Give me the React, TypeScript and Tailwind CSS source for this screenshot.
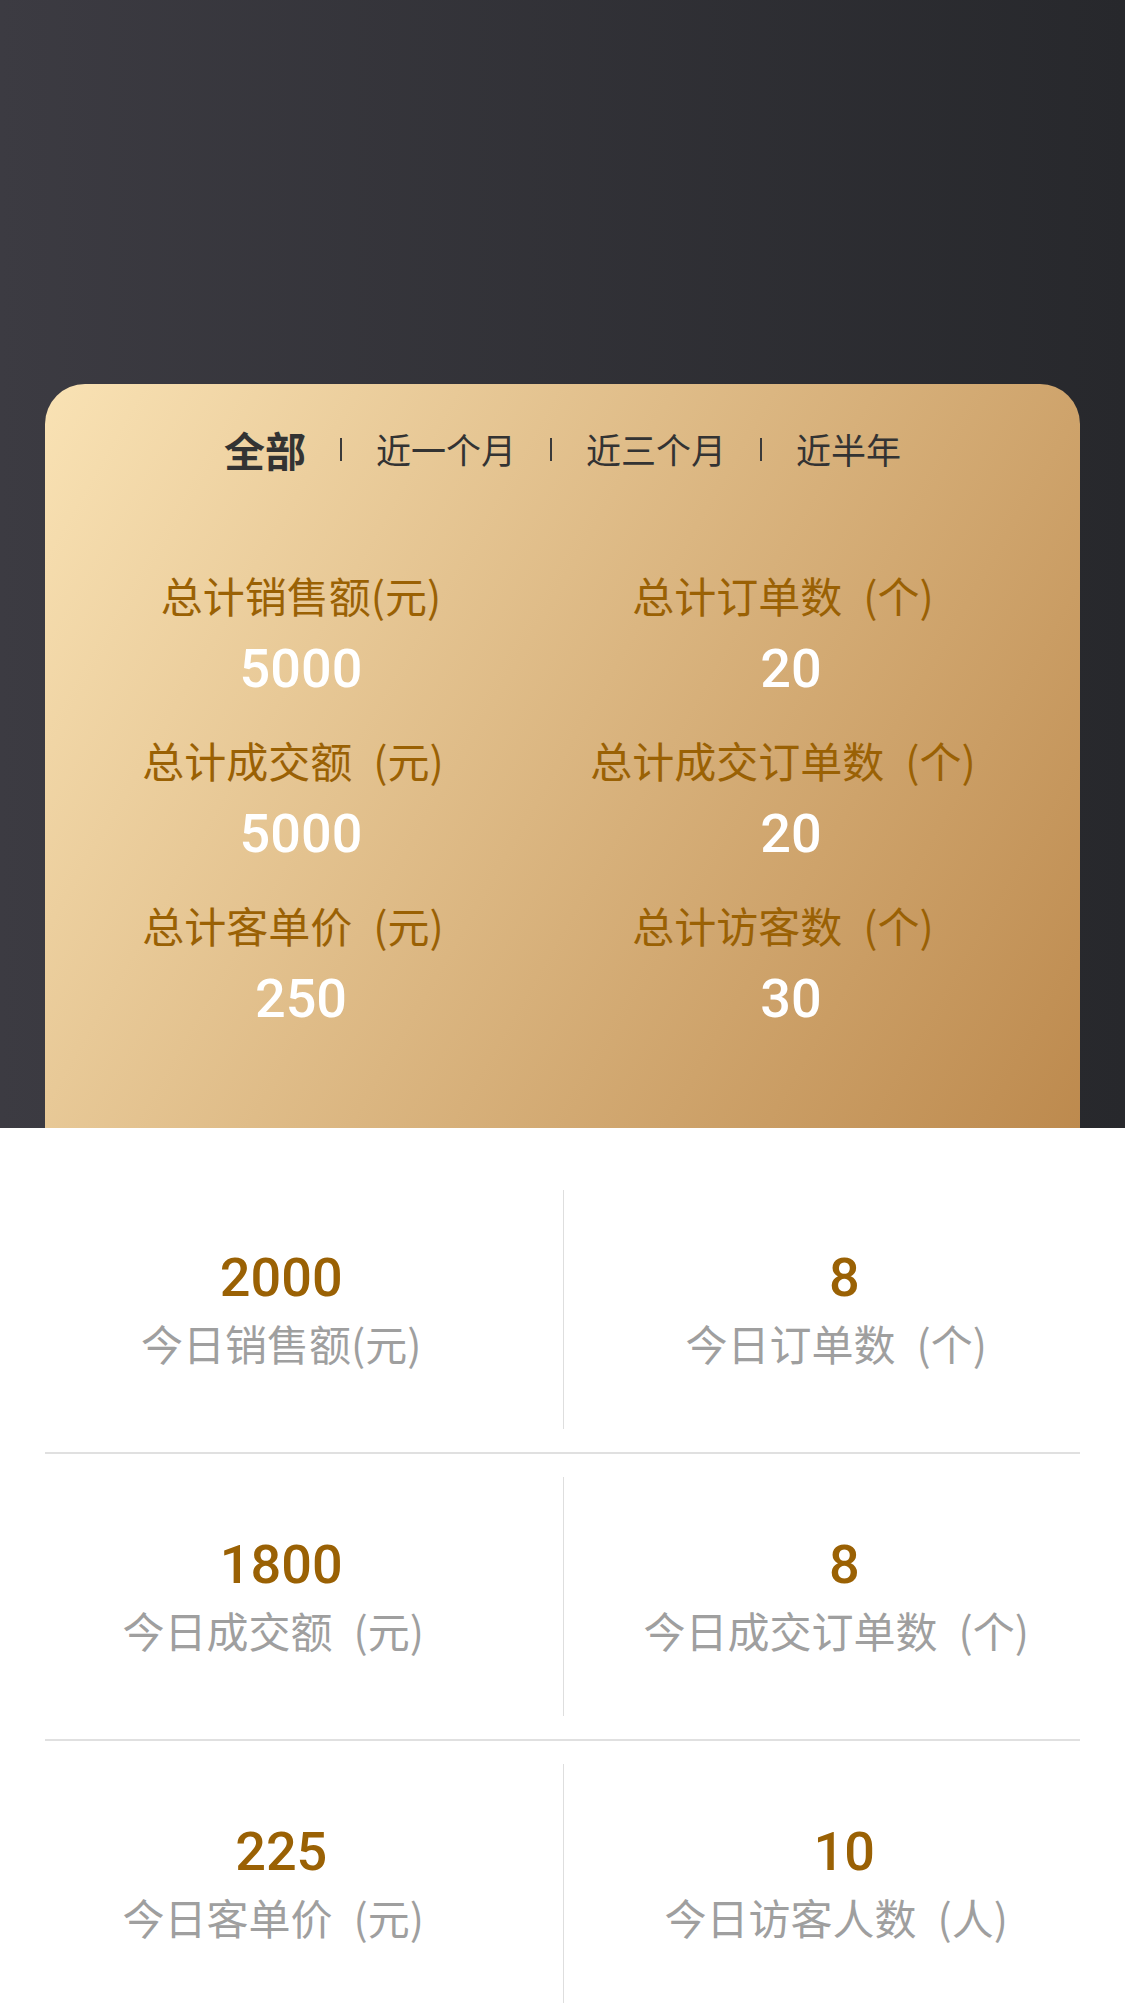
import React from "react";

const cjk = { fontFamily: '"Noto Sans CJK SC", "Noto Sans", sans-serif' };
const num = { fontFamily: 'Roboto, "Liberation Sans", sans-serif' };

const tabs = ["全部", "近一个月", "近三个月", "近半年"];

// [main, unit, spaced]
type Label = [string, string, boolean];

const totals: [Label, string][] = [
  [["总计销售额", "(元)", false], "5000"],
  [["总计订单数", "(个)", true], "20"],
  [["总计成交额", "(元)", true], "5000"],
  [["总计成交订单数", "(个)", true], "20"],
  [["总计客单价", "(元)", true], "250"],
  [["总计访客数", "(个)", true], "30"],
];

const today: [string, Label][][] = [
  [
    ["2000", ["今日销售额", "(元)", false]],
    ["8", ["今日订单数", "(个)", true]],
  ],
  [
    ["1800", ["今日成交额", "(元)", true]],
    ["8", ["今日成交订单数", "(个)", true]],
  ],
  [
    ["225", ["今日客单价", "(元)", true]],
    ["10", ["今日访客人数", "(人)", true]],
  ],
];

function LabelText({ l, className }: { l: Label; className: string }) {
  const [main, unit, spaced] = l;
  return (
    <div className={className + (spaced ? " pr-[16px]" : "")} style={cjk}>
      {main}
      {spaced ? "\u2002" : ""}
      {unit}
    </div>
  );
}

function Cell({ value, label, divider }: { value: string; label: Label; divider?: boolean }) {
  return (
    <div
      className={
        "flex h-[239px] w-1/2 flex-col items-center justify-center " +
        (divider ? "border-l border-[#dedede]" : "")
      }
    >
      <div className="h-[60px] text-[54px] font-medium leading-[60px] text-[#9a6104]" style={num}>
        {value}
      </div>
      <LabelText
        l={label}
        className="mt-[10px] h-[50px] whitespace-nowrap text-[42px] leading-[50px] text-[#9f9f9f]"
      />
      <div className="h-[4px]" />
    </div>
  );
}

export default function App() {
  return (
    <div className="min-h-[2004px] w-full overflow-hidden bg-white">
      <div className="bg-gradient-to-r from-[#3c3b42] to-[#27282c] px-[45px] pt-[384px]">
        <div className="h-[744px] rounded-t-[40px] bg-[linear-gradient(120deg,#f9e2b4_0%,#bd8a4e_100%)]">
          <div className="flex pt-[35px]">
            <div className="flex h-[60px] w-full items-center justify-center gap-[34px]" style={cjk}>
              {tabs.map((t, i) => (
                <React.Fragment key={t}>
                  {i > 0 && <div className="h-[23px] w-[2px] bg-[#3a3a3a]" />}
                  <div
                    className={
                      i === 0
                        ? "text-[41px] font-bold leading-[60px] text-[#333333]"
                        : "text-[35px] leading-[60px] text-[#333333]"
                    }
                  >
                    {t}
                  </div>
                </React.Fragment>
              ))}
            </div>
          </div>
          <div className="ml-[11px] mt-[91px] grid grid-cols-[490px_490px] gap-y-[36px]">
            {totals.map(([label, value]) => (
              <div key={label[0]} className="flex flex-col items-center">
                <LabelText
                  l={label}
                  className="h-[50px] whitespace-nowrap text-[42px] leading-[50px] text-[#9a6104]"
                />
                <div className="mt-[19px] h-[60px] text-[54px] font-medium leading-[60px] text-white" style={num}>
                  {value}
                </div>
              </div>
            ))}
          </div>
        </div>
      </div>
      <div className="bg-white pt-[39px]">
        {today.map((row, i) => (
          <div key={i}>
            <div className="flex py-[23px]">
              <Cell value={row[0][0]} label={row[0][1]} />
              <Cell value={row[1][0]} label={row[1][1]} divider />
            </div>
            <div className="mx-[45px] h-[2px] bg-[#e0e0e0]" />
          </div>
        ))}
      </div>
    </div>
  );
}
